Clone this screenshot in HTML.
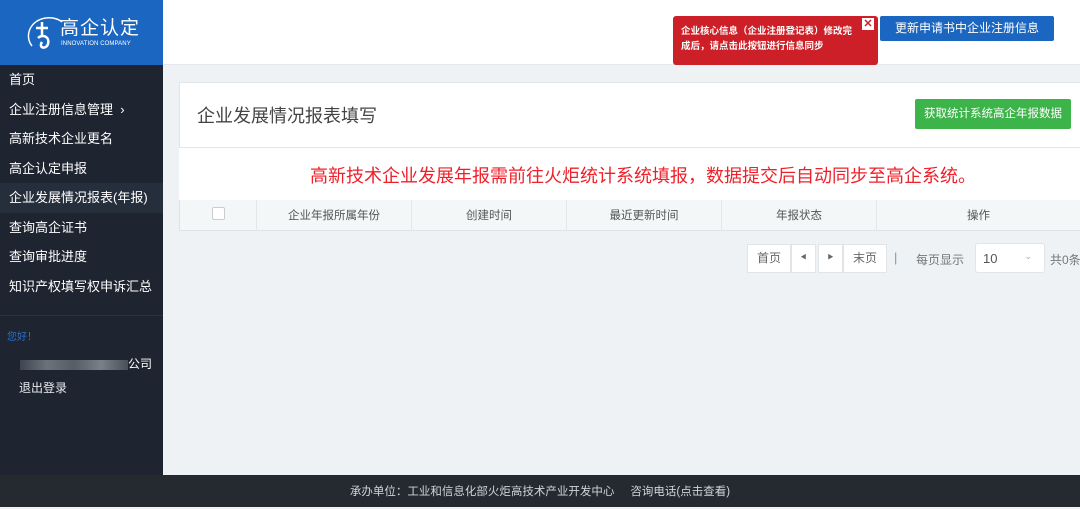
<!DOCTYPE html><html><head><meta charset="utf-8"><style>
*{margin:0;padding:0;box-sizing:border-box}
body{width:1080px;height:507px;overflow:hidden;background:#eef2f5;font-family:"Liberation Sans","Noto Sans CJK SC",sans-serif;position:relative}
.top{position:absolute;left:0;top:0;width:1080px;height:65px;background:#fff;border-bottom:1px solid #e4e8ec}
.logo{position:absolute;left:0;top:0;width:163px;height:65px;background:#1b66c0;color:#fff}
.side{position:absolute;left:0;top:65px;width:163px;height:410px;background:#1e2530}
.side .it{height:29.5px;line-height:29.5px;padding-left:9px;color:#fff;font-size:13px}
.side .act{background:#252e3b}
.foot{position:absolute;left:0;top:475px;width:1080px;height:32px;background:#252a31;color:#cfd3d8;font-size:11.5px;line-height:34px;text-align:center}
.abs{position:absolute}
th{font-weight:normal}
</style></head><body>
<div class="top"></div>
<div class="logo">
<svg class="abs" style="left:24px;top:14px" width="40" height="40" viewBox="0 0 40 40"><path d="M8 32 C0 22 6 6 22 4 C30 3 36 6 38 8" stroke="#fff" stroke-width="1.5" fill="none"/><path d="M12 14 H24 M18 8 V22 M14 24 C18 20 26 22 24 30 C22 36 14 34 18 28" stroke="#fff" stroke-width="2.5" fill="none"/></svg>
<div class="abs" style="left:60px;top:19px;font-size:19px;line-height:19px;letter-spacing:1px">高企认定</div>
<div class="abs" style="left:61px;top:41px;font-size:6px;line-height:6px;letter-spacing:.1px">INNOVATION COMPANY</div>
</div>
<div class="abs" style="left:673px;top:16px;width:205px;height:49px;background:#cc1f27;border-radius:3px;color:#fff;font-size:9.5px;font-weight:bold;padding:8px 0 0 8px;line-height:15px">企业核心信息（企业注册登记表）修改完<br>成后，请点击此按钮进行信息同步</div>
<div class="abs" style="left:862px;top:18px;width:12px;height:12px;background:#fff;color:#cc1f27;font-size:11px;line-height:12px;text-align:center;font-weight:bold">✕</div>
<div class="abs" style="left:880px;top:16px;width:174px;height:25px;background:#1b66c0;border-radius:2px;color:#fff;font-size:12px;line-height:25px;text-align:center">更新申请书中企业注册信息</div>
<div class="side">
<div class="it">首页</div><div class="it">企业注册信息管理 &nbsp;›</div><div class="it">高新技术企业更名</div><div class="it">高企认定申报</div><div class="it act">企业发展情况报表(年报)</div><div class="it">查询高企证书</div><div class="it">查询审批进度</div><div class="it">知识产权填写权申诉汇总</div>
<div style="border-top:1px solid #2a323e;margin-top:14px;padding:12px 0 0 7px;color:#2a6fd0;font-size:10px">您好！</div>
<div style="margin:12px 0 0 20px;color:#fff;font-size:12px;height:14px"><span style="display:inline-block;width:108px;height:10px;background:linear-gradient(90deg,#3d4550,#6b727b,#565d66,#7a8087,#4a5059);vertical-align:middle"></span>公司</div>
<div style="margin:10px 0 0 19px;color:#e8eaec;font-size:12px">退出登录</div>
</div>
<div class="abs" style="left:179px;top:82px;width:901px;height:66px;background:#fff;border:1px solid #e2e6ea;border-right:none"></div>
<div class="abs" style="left:197px;top:102px;font-size:18px;color:#444">企业发展情况报表填写</div>
<div class="abs" style="left:915px;top:99px;width:156px;height:30px;background:#3cb449;border-radius:2px;color:#fff;font-size:11.5px;line-height:30px;text-align:center;white-space:nowrap">获取统计系统高企年报数据</div>
<div class="abs" style="left:179px;top:148px;width:901px;height:52px;background:#fff"></div>
<div class="abs" style="left:310px;top:162px;font-size:18px;color:#f0202a">高新技术企业发展年报需前往火炬统计系统填报，数据提交后自动同步至高企系统。</div>
<table class="abs" style="left:179px;top:200px;width:901px;height:31px;border-collapse:collapse;background:#f3f7f8;font-size:11.5px;color:#555;border-bottom:1px solid #dde2e6;border-left:1px solid #dde2e6">
<tr><th style="width:77px"><span style="display:inline-block;width:13px;height:13px;border:1px solid #ccc;border-radius:2px;background:#fff"></span></th><th style="width:155px;border-left:1px solid #e3e7ea">企业年报所属年份</th><th style="width:155px;border-left:1px solid #e3e7ea">创建时间</th><th style="width:155px;border-left:1px solid #e3e7ea">最近更新时间</th><th style="width:155px;border-left:1px solid #e3e7ea">年报状态</th><th style="border-left:1px solid #e3e7ea">操作</th></tr></table>
<div class="abs" style="left:747px;top:244px;height:29px;display:flex;font-size:12px;color:#666">
<div style="width:44px;background:#fff;border:1px solid #e1e5e8;line-height:27px;text-align:center">首页</div>
<div style="width:25px;background:#fff;border:1px solid #e1e5e8;line-height:27px;text-align:center;font-size:6px">◀</div>
<div style="width:2px"></div>
<div style="width:25px;background:#fff;border:1px solid #e1e5e8;line-height:27px;text-align:center;font-size:6px">▶</div>
<div style="width:44px;background:#fff;border:1px solid #e1e5e8;line-height:27px;text-align:center">末页</div>
</div>
<div class="abs" style="left:894px;top:250px;font-size:13px;color:#7a98b8">|</div>
<div class="abs" style="left:916px;top:251px;font-size:12px;color:#777">每页显示</div>
<div class="abs" style="left:975px;top:243px;width:70px;height:30px;background:#fff;border:1px solid #e1e5e8;border-radius:3px;font-size:13px;color:#555;padding:7px 0 0 7px">10<span style="position:absolute;right:12px;top:7px;font-size:9px;color:#aaa">⌄</span></div>
<div class="abs" style="left:1050px;top:251px;font-size:12px;color:#777;white-space:nowrap">共0条</div>
<div class="foot">承办单位：工业和信息化部火炬高技术产业开发中心 &nbsp; &nbsp; 咨询电话(点击查看)</div>
</body></html>
